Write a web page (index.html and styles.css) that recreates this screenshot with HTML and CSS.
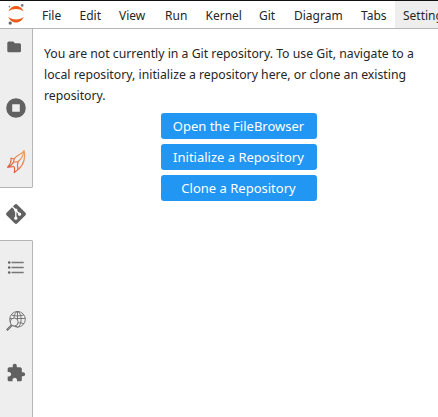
FILE: index.html
```html
<!DOCTYPE html>
<html lang="en">
<head>
<meta charset="utf-8">
<title>JupyterLab</title>
<link rel="stylesheet" href="styles.css">
</head>
<body>
<header class="menubar">
  <svg class="logo" viewBox="0 0 32 27">
    <path d="M8.300 10.600C10.300 6.500 13 5 16 5s6 1.500 7.700 5.600C21.600 8.700 19 8 16 8S10.400 8.700 8.300 10.600z" fill="#ef5a16"/>
    <path d="M8.300 15.800C10.400 17.700 13 18.500 16 18.500s5.700-.8 7.700-2.700C22 20 19 21.500 16 21.500s-6-1.500-7.700-5.700z" fill="#ef5a16"/>
    <circle cx="22.200" cy="4.400" r="1.300" fill="#767677"/>
    <circle cx="9.500" cy="5.600" r=".8" fill="#767677"/>
    <circle cx="10.200" cy="22.100" r="1.600" fill="#616262"/>
  </svg>
  <nav class="menus">
    <span>File</span><span>Edit</span><span>View</span><span>Run</span><span>Kernel</span><span>Git</span><span>Diagram</span><span>Tabs</span><span class="active">Settings</span>
  </nav>
</header>
<div class="main">
  <aside class="sidebar">
    <div class="tab folder"><svg viewBox="0 0 20 20"><path d="M2.800 4.500h4.500l1.600 1.700h4.600A1.500 1.500 0 0 1 15 7.700v6a1.500 1.500 0 0 1-1.500 1.500H2.800A1.500 1.500 0 0 1 1.300 13.700V6a1.500 1.500 0 0 1 1.500-1.500z" fill="#616161"/></svg></div>
    <div class="tab"><svg viewBox="0 0 20 20"><path fill-rule="evenodd" d="M10 .2a9.800 9.800 0 1 0 0 19.600A9.800 9.800 0 0 0 10 .2zM6.200 6.200h7.600v7.600H6.200z" fill="#616161"/></svg></div>
    <div class="tab"><svg viewBox="0 0 20 26">
      <defs><linearGradient id="flame" gradientUnits="userSpaceOnUse" x1="3" y1="23" x2="18" y2="4"><stop offset="0" stop-color="#d9553c"/><stop offset="1" stop-color="#efa05c"/></linearGradient></defs>
      <g fill="none" stroke="url(#flame)" stroke-width="1.200" stroke-linejoin="round"><path d="M18.100 2.500c-2 4.500-7.500 4-10.100 8.600l-.3 2.600c1.500.5 3 .4 4.500-.2 2.700-2 5-5.500 5.900-11 1.800 9-1.500 17-9.800 22.100.6-2.600.3-4.600-.5-6.400"/><path d="M8 11.100L5 10c.4 3.500-.9 6.600-3.400 9.200 2 .2 4-.2 6.200-1M1.600 19.200c3-1.200 5-3 6.100-5.500M12.200 13.500c-1 2.500-1 5.500-.3 8.300"/></g>
    </svg></div>
    <div class="tab current"><svg viewBox="0 0 20 20"><path d="M8.600.8a2 2 0 0 1 2.800 0l7.800 7.800a2 2 0 0 1 0 2.800l-7.800 7.800a2 2 0 0 1-2.800 0L.8 11.400a2 2 0 0 1 0-2.800z" fill="#616161"/><g stroke="#fff" stroke-width="1.300" fill="#fff"><path d="M6.200 2.500l3.600 3.700V14M9.800 6.200l3.700 4" fill="none"/><circle cx="9.800" cy="6.200" r="1"/><circle cx="9.800" cy="14.200" r="1"/><circle cx="13.600" cy="10.200" r="1"/></g></svg></div>
    <div class="tab"><svg viewBox="0 0 20 20"><path d="M5.500 4.500h12.200M5.500 9.500h12.200M5.500 14.500h12.200" stroke="#777" stroke-width="1.500"/><g fill="#616161"><circle cx="3.200" cy="4.500" r="1.250"/><circle cx="3.200" cy="9.500" r="1.250"/><circle cx="3.200" cy="14.500" r="1.250"/></g></svg></div>
    <div class="tab"><svg viewBox="0 0 20 20"><g fill="none" stroke="#6c6c6c" stroke-width=".9"><circle cx="11.500" cy="8.300" r="7.800"/><ellipse cx="11.500" cy="8.300" rx="3.600" ry="7.800"/><path d="M11.500.5v10M4 7.500h15.500M5.400 4c4 1.300 8.200 1.300 12.200 0M9 12.300c3-.8 6-.7 9 .3"/></g><circle cx="8.200" cy="11" r="4" fill="#eee" stroke="#757575"/><path d="M5.800 14.200L.8 19.200" stroke="#616161" stroke-width="2"/><path d="M5.500 14.500L1.300 18.700" stroke="#ccc" stroke-width=".5"/></svg></div>
    <div class="tab"><svg viewBox="0 0 24 24"><path d="M20.500 11H19V7c0-1.100-.9-2-2-2h-4V3.500a2.500 2.500 0 0 0-5 0V5H4c-1.100 0-1.990.9-1.990 2v3.800H3.500c1.490 0 2.700 1.210 2.700 2.700s-1.210 2.700-2.700 2.700H2V20c0 1.100.9 2 2 2h3.800v-1.500c0-1.490 1.210-2.700 2.700-2.700s2.700 1.210 2.700 2.700V22H17c1.100 0 2-.9 2-2v-4h1.500a2.500 2.500 0 0 0 0-5z" fill="#616161"/></svg></div>
  </aside>
  <main class="panel">
    <p>You are not currently in a Git repository. To use Git, navigate to a<br>local repository, initialize a repository here, or clone an existing<br>repository.</p>
    <div class="actions"><button>Open the FileBrowser</button><button>Initialize a Repository</button><button>Clone a Repository</button></div>
  </main>
</div>
</body>
</html>
```
FILE: styles.css
```css
* { box-sizing: border-box; }
body {
  margin: 0;
  height: 417px;
  overflow: hidden;
  display: flex;
  flex-direction: column;
  background: #fff;
  color: #262626;
  font: 12.25px "Noto Sans", sans-serif;
}
.menubar {
  flex: none;
  height: 29px;
  display: flex;
  border-top: 1px solid #111;
  border-bottom: 1px solid #b5b5b5;
}
.logo { flex: 0 0 32px; height: 27px; }
.menus {
  display: grid;
  grid-template-columns: 37.5px 39.5px 46px 40.5px 53.5px 35px 67px 42px 60px;
  margin-left: 2px;
  line-height: 30px;
  height: 27px;
  font-size: 12px;
}
.menus span { padding-left: 8px; height: 27px; white-space: nowrap; }
.menus .active { background: #eee; }
.main { flex: 1; display: flex; min-height: 0; }
.sidebar { flex: 0 0 33px; background: #eee; }
.tab {
  height: 53px;
  display: flex;
  align-items: center;
  justify-content: center;
  border-right: 1px solid #b5b5b5;
}
.tab svg { width: 20px; height: 20px; }
.tab:nth-child(3) svg { height: 26px; }
.tab.folder { height: 52px; padding-bottom: 16px; }
.tab.current {
  height: 54px;
  background: #fff;
  border-right-color: #fff;
  border-top: 1px solid #b5b5b5;
  border-bottom: 1px solid #b5b5b5;
}
.tab:last-child { height: 73px; padding-bottom: 21px; }
.panel { flex: 1; padding: 14px 4px 0 11px; }
p { margin: 0; line-height: 21px; white-space: nowrap; }
.actions {
  display: flex;
  flex-direction: column;
  align-items: center;
  gap: 5px;
  margin-top: 7px;
}
button {
  width: 156px;
  height: 26px;
  padding: 0 1px 0 0;
  border: 0;
  border-radius: 3px;
  background: #2196f3;
  color: #fff;
  font: 13px "Noto Sans", sans-serif;
}
```
